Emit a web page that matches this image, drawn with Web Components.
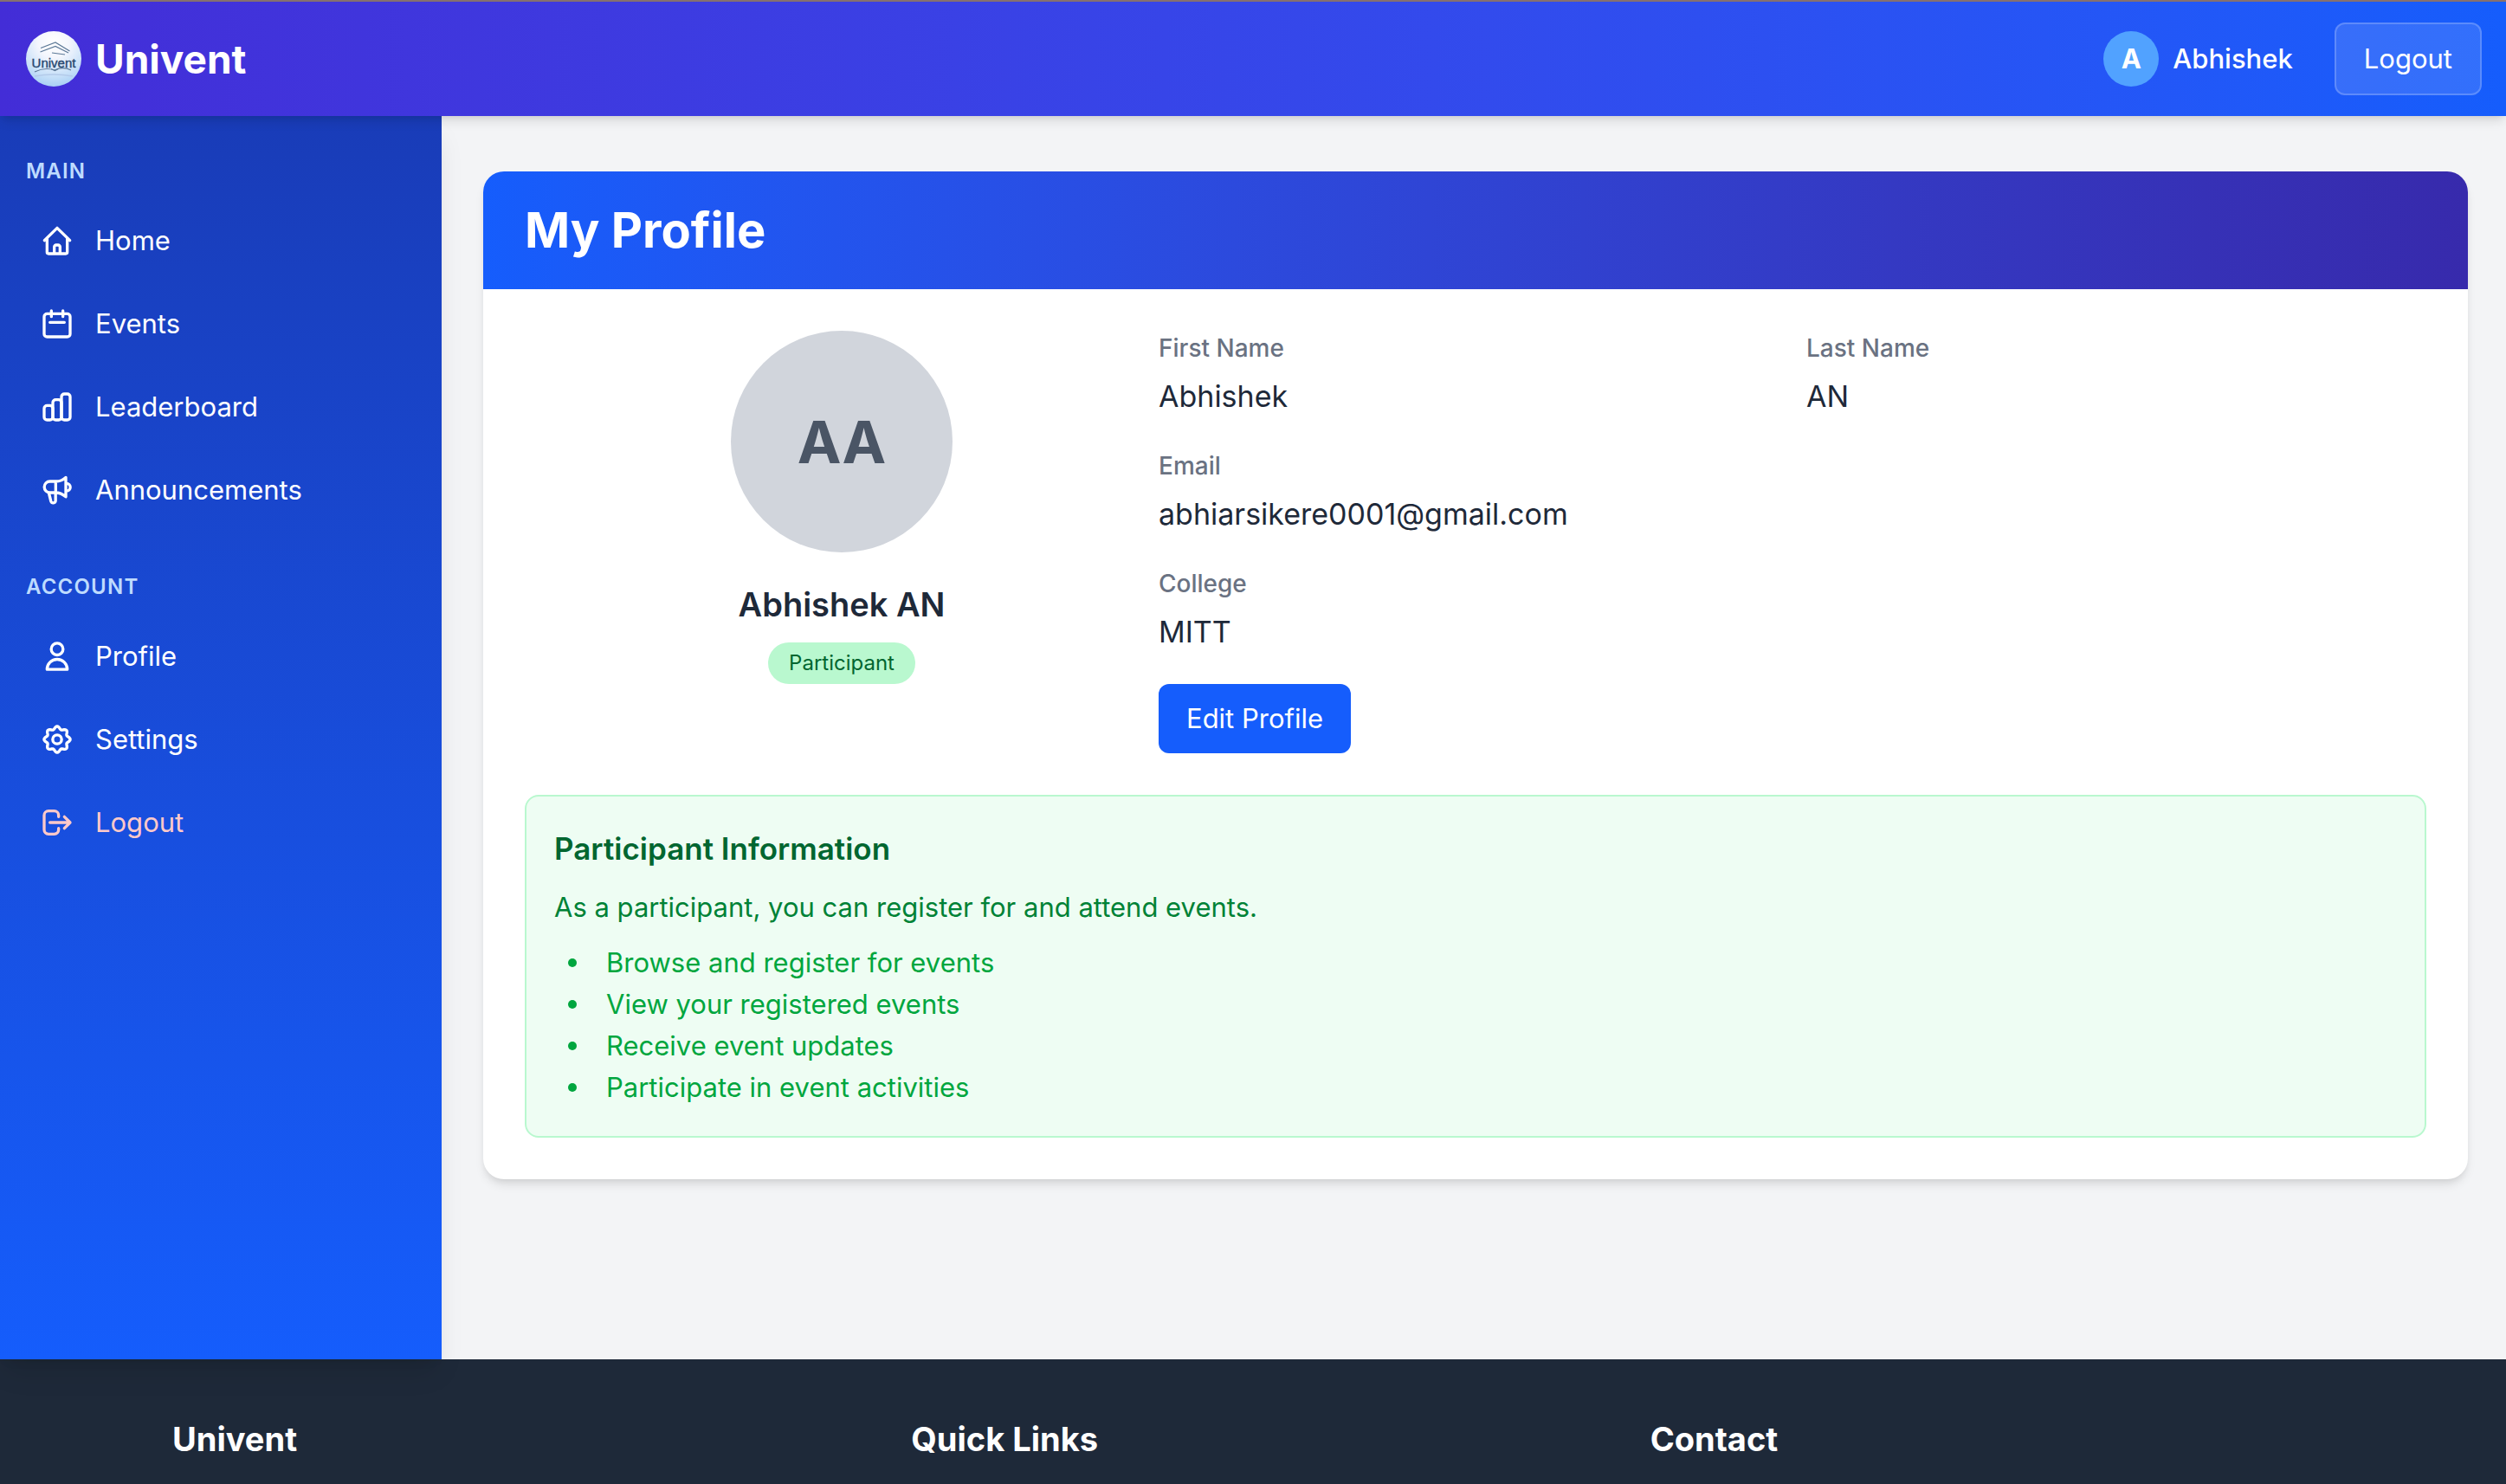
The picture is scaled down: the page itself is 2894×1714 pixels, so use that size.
<!DOCTYPE html>
<html lang="en">
<head>
<meta charset="utf-8">
<meta name="viewport" content="width=device-width, initial-scale=1">
<title>Univent - My Profile</title>
<style>
  body {
    margin: 0;
    min-height: 100vh;
    display: flex;
    flex-direction: column;
    background: #f3f4f6;
    color: #1e2939;
    font-family: Inter, "Liberation Sans", sans-serif;
    font-size: 31px;
    line-height: 48px;
    --shadow-md: 0 8px 12px -2px rgb(0 0 0 / .1), 0 4px 8px -4px rgb(0 0 0 / .1);
    --shadow-lg: 0 20px 30px -6px rgb(0 0 0 / .1), 0 8px 12px -8px rgb(0 0 0 / .1);
  }
  .layout { flex: 1; display: flex; }
  main { flex: 1; min-width: 0; padding: 64px 44px 64px 48px; }
</style>
</head>
<body>
<app-header user="Abhishek"></app-header>
<div class="layout">
  <app-sidebar>
    <nav-group label="Main">
      <nav-item icon="home">Home</nav-item>
      <nav-item icon="events">Events</nav-item>
      <nav-item icon="chart">Leaderboard</nav-item>
      <nav-item icon="megaphone">Announcements</nav-item>
    </nav-group>
    <nav-group label="Account">
      <nav-item icon="user">Profile</nav-item>
      <nav-item icon="settings">Settings</nav-item>
      <nav-item icon="logout" danger>Logout</nav-item>
    </nav-group>
  </app-sidebar>
  <main>
    <profile-card heading="My Profile">
      <profile-badge slot="identity" initials="AA" name="Abhishek AN" role-name="Participant"></profile-badge>
      <profile-field label="First Name">Abhishek</profile-field>
      <profile-field label="Last Name">AN</profile-field>
      <profile-field label="Email" wide>abhiarsikere0001@gmail.com</profile-field>
      <profile-field label="College" wide>MITT</profile-field>
      <primary-button>Edit Profile</primary-button>
      <info-panel slot="info"></info-panel>
    </profile-card>
  </main>
</div>
<app-footer></app-footer>

<script>
const define = (name, render) => customElements.define(name, class extends HTMLElement {
  constructor() {
    super();
    this.attachShadow({ mode: "open" });
  }
  connectedCallback() {
    this.shadowRoot.innerHTML =
      `<style>*, ::before { box-sizing: border-box; } h1, h2, h3, p, ul, dl, dd { margin: 0; padding: 0; } a { color: inherit; text-decoration: none; } button { font: inherit; color: inherit; cursor: pointer; margin: 0; }</style>` + render(this);
  }
});

// Outline of an eight-lobed gear centred in the 24-unit box.
const gear = () => {
  const pts = [];
  for (let i = 0; i < 96; i++) {
    const t = i / 96 * Math.PI * 2;
    const r = 8.1 + 0.95 * Math.cos(8 * t);
    pts.push((12 + r * Math.cos(t)).toFixed(2) + " " + (12 + r * Math.sin(t)).toFixed(2));
  }
  return "M" + pts.join("L") + "Z";
};

const icons = {
  home: `<path d="M3.2 11.8 12 3.2l8.8 8.6M5 10.6V20a1 1 0 0 0 1 1h12a1 1 0 0 0 1-1v-9.4M10 21v-4.7a1.3 1.3 0 0 1 1.3-1.3h1.4a1.3 1.3 0 0 1 1.3 1.3V21"/>`,
  events: `<rect x="3" y="5" width="18" height="16" rx="2"/><path d="M8 3v4M16 3v4M7 11h10"/>`,
  chart: `<rect x="3" y="11" width="6" height="10" rx="2"/><rect x="9" y="7" width="6" height="14" rx="2"/><rect x="15" y="3" width="6" height="18" rx="2"/>`,
  megaphone: `<path d="M18 3.2C16 5.2 13.5 6 11 6H7a3.9 3.9 0 0 0 0 7.8h4c2.5 0 5 1.2 7 2.9zM11 6v7.8M6.2 13.8l1.5 6a1.65 1.65 0 0 0 3.2-.4v-5.6M18.5 7.4a2.6 2.6 0 0 1 0 5.2"/>`,
  user: `<circle cx="12" cy="7" r="4.1"/><path d="M5 21.1a7 7 0 0 1 14 0z"/>`,
  settings: `<path d="${gear()}"/><circle cx="12" cy="12" r="3.1"/>`,
  logout: `<path d="M13 8V7a3 3 0 0 0-3-3H6a3 3 0 0 0-3 3v10a3 3 0 0 0 3 3h4a3 3 0 0 0 3-3v-1M7 12h14M17 8l4 4-4 4"/>`
};

define("app-icon", el => `
  <style>
    :host { display: block; width: 40px; height: 40px; }
    svg { display: block; width: 100%; height: 100%; fill: none; stroke: currentColor; stroke-width: 2; stroke-linecap: round; stroke-linejoin: round; }
  </style>
  <svg viewBox="0 0 24 24" aria-hidden="true">${icons[el.getAttribute("name")]}</svg>`);

define("brand-logo", () => `
  <style>
    :host { display: block; width: 64px; height: 64px; }
    svg { display: block; }
    text { font: 15px "Liberation Sans Narrow", "Liberation Sans", sans-serif; fill: #27476f; stroke: #27476f; stroke-width: .4; }
  </style>
  <svg width="64" height="64" viewBox="0 0 64 64" fill="none">
    <defs>
      <radialGradient id="g" cx=".5" cy=".2" r=".8">
        <stop offset="0" stop-color="#fff"/>
        <stop offset=".35" stop-color="#f4f6fd"/>
        <stop offset=".8" stop-color="#c3def8"/>
        <stop offset="1" stop-color="#a8d0f5"/>
      </radialGradient>
    </defs>
    <circle cx="32" cy="32" r="32" fill="url(#g)"/>
    <g stroke="#5c7896" stroke-width="1.2">
      <path d="M17 19.500 34 13l16.500 10"/>
      <path d="M16.500 24 34 17.500l15 7.500"/>
      <path d="M30 25l15 2"/>
      <path d="M10 47c8-4 17-4 23-2 6-3 13-3 19 0"/>
      <path d="M29 43.500l4.500 2 4-2"/>
    </g>
    <path d="M10 52q22-4 44 0" stroke="#b4cbea" stroke-width="1.500"/>
    <text x="32" y="41.500" text-anchor="middle">Univent</text>
  </svg>`);

define("app-header", el => `
  <style>
    :host { display: block; position: relative; z-index: 2; }
    header {
      display: flex; align-items: center; justify-content: space-between;
      height: 134px; padding: 0 28px 0 30px; color: #fff;
      border-top: 2px solid #86706f;
      background: linear-gradient(to right in oklab, #432dd7, #155dfc);
      box-shadow: var(--shadow-md);
    }
    .brand, .user, .actions { display: flex; align-items: center; gap: 16px; }
    .brand { font-size: 46px; line-height: 64px; font-weight: 700; }
    .actions { gap: 48px; }
    .user { font-weight: 500; }
    .avatar { width: 64px; height: 64px; border-radius: 50%; background: #51a2ff; display: grid; place-items: center; font-weight: 700; }
    button { padding: 16px 32px; border: 2px solid rgb(255 255 255 / .2); border-radius: 12px; background: rgb(255 255 255 / .12); }
  </style>
  <header>
    <a class="brand" href="#"><brand-logo></brand-logo><span>Univent</span></a>
    <div class="actions">
      <div class="user"><span class="avatar">${el.getAttribute("user")[0]}</span><span>${el.getAttribute("user")}</span></div>
      <button type="button">Logout</button>
    </div>
  </header>`);

define("app-sidebar", () => `
  <style>
    :host { display: block; flex: none; width: 510px; position: relative; z-index: 1; color: #fff;
      background: linear-gradient(to bottom in oklab, #193cb8, #155dfc); box-shadow: var(--shadow-lg); }
    nav { display: flex; flex-direction: column; gap: 56px; padding: 48px 30px; }
  </style>
  <nav><slot></slot></nav>`);

define("nav-group", el => `
  <style>
    :host { display: block; }
    h3 { margin-bottom: 24px; font-size: 24px; line-height: 32px; font-weight: 600; letter-spacing: .05em; text-transform: uppercase; color: #bedbff; }
    div { display: flex; flex-direction: column; gap: 16px; }
  </style>
  <h3>${el.getAttribute("label")}</h3>
  <div><slot></slot></div>`);

define("nav-item", el => `
  <style>
    :host { display: block; }
    :host([danger]) { color: #ffc9c9; }
    a { display: flex; align-items: center; gap: 24px; padding: 16px; border-radius: 12px; }
  </style>
  <a href="#"><app-icon name="${el.getAttribute("icon")}"></app-icon><span><slot></slot></span></a>`);

define("profile-card", el => `
  <style>
    :host { display: block; overflow: hidden; border-radius: 24px; background: #fff; box-shadow: var(--shadow-md); }
    header { padding: 32px 48px; color: #fff; background: linear-gradient(to right in oklab, #155dfc, #372aac); }
    h1 { font-size: 56px; line-height: 72px; font-weight: 700; }
    .body { display: flex; flex-direction: column; gap: 48px; padding: 48px; }
    .columns { display: grid; grid-template-columns: 1fr 2fr; }
    .fields { display: grid; grid-template-columns: 1fr 1fr; gap: 32px; justify-items: start; }
  </style>
  <header><h1>${el.getAttribute("heading")}</h1></header>
  <div class="body">
    <div class="columns">
      <slot name="identity"></slot>
      <div class="fields"><slot></slot></div>
    </div>
    <slot name="info"></slot>
  </div>`);

define("profile-badge", el => `
  <style>
    :host { display: flex; flex-direction: column; align-items: center; }
    .avatar { width: 256px; height: 256px; border-radius: 50%; display: grid; place-items: center; background: #d1d5dc; color: #4a5565; font-size: 68px; line-height: 80px; font-weight: 700; }
    h2 { margin: 32px 0 16px; font-size: 38px; line-height: 56px; font-weight: 600; }
    .role { padding: 8px 24px; border-radius: 24px; background: #b9f8cf; color: #016630; font-size: 24px; line-height: 32px; }
  </style>
  <div class="avatar">${el.getAttribute("initials")}</div>
  <h2>${el.getAttribute("name")}</h2>
  <span class="role">${el.getAttribute("role-name")}</span>`);

define("profile-field", el => `
  <style>
    :host { display: block; }
    :host([wide]) { grid-column: 1 / -1; }
    h3 { margin-bottom: 8px; font-size: 28px; line-height: 40px; font-weight: 500; color: #6a7282; }
    p { font-size: 34px; line-height: 56px; }
  </style>
  <h3>${el.getAttribute("label")}</h3>
  <p><slot></slot></p>`);

define("primary-button", () => `
  <style>
    :host { display: block; }
    button { display: block; padding: 16px 32px; border: 0; border-radius: 12px; background: #155dfc; color: #fff; }
  </style>
  <button type="button"><slot></slot></button>`);

define("info-panel", () => `
  <style>
    :host { display: block; padding: 32px; border: 2px solid #b9f8cf; border-radius: 16px; background: #eefdf3; }
    h3 { margin-bottom: 16px; font-size: 35px; line-height: 56px; font-weight: 600; color: #016630; }
    p { margin-bottom: 16px; color: #008236; }
    ul { list-style: none; color: #00a63e; }
    li { display: flex; align-items: center; gap: 34px; padding-left: 16px; }
    li::before { content: ""; width: 10px; height: 10px; border-radius: 50%; background: currentColor; }
  </style>
  <h3>Participant Information</h3>
  <p>As a participant, you can register for and attend events.</p>
  <ul>
    <li>Browse and register for events</li>
    <li>View your registered events</li>
    <li>Receive event updates</li>
    <li>Participate in event activities</li>
  </ul>`);

define("app-footer", () => `
  <style>
    :host { display: block; background: #1e2939; color: #fff; }
    footer { max-width: 2560px; margin: 0 auto; padding: 64px 32px 24px; display: grid; grid-template-columns: repeat(3, 1fr); gap: 64px; }
    h3 { font-size: 38px; line-height: 56px; font-weight: 700; }
  </style>
  <footer><h3>Univent</h3><h3>Quick Links</h3><h3>Contact</h3></footer>`);
</script>
</body>
</html>
